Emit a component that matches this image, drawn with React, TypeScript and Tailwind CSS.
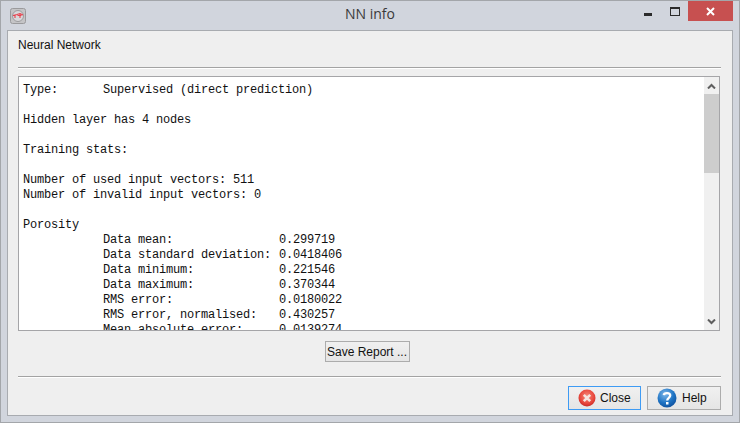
const stats = [
  ["Data mean:", "0.299719"],
  ["Data standard deviation:", "0.0418406"],
  ["Data minimum:", "0.221546"],
  ["Data maximum:", "0.370344"],
  ["RMS error:", "0.0180022"],
  ["RMS error, normalised:", "0.430257"],
  ["Mean absolute error:", "0.0139274"]
];

function Line({ children }: { children?: React.ReactNode }) {
  return <div className="h-[15px] whitespace-pre leading-[15px]">{children}</div>;
}

function ChevronUp() {
  return (
    <svg width="9" height="6" viewBox="0 0 9 6" fill="none" stroke="#5f5f5f" strokeWidth="2">
      <path d="M1 5.5 4.5 2 8 5.5" />
    </svg>
  );
}

function ChevronDown() {
  return (
    <svg width="9" height="6" viewBox="0 0 9 6" fill="none" stroke="#5f5f5f" strokeWidth="2">
      <path d="M1 .5 4.5 4 8 .5" />
    </svg>
  );
}

function AppIcon() {
  return (
    <svg width="16" height="16" viewBox="0 0 16 16" fill="none">
      <rect x=".5" y=".5" width="15" height="15" rx="2" fill="#c4c4c6" stroke="#9a9a9c" />
      <circle cx="8" cy="8" r="5.5" fill="#d8d8da" stroke="#9c9c9e" />
      <path d="M3 7.5 7 6.5 10 5.5 13 7M5 7v3M10 6v4M7.5 7.5h4" stroke="#e8404c" strokeWidth="1.1" />
    </svg>
  );
}

function CloseIcon() {
  return (
    <svg width="18" height="18" viewBox="0 0 18 18" fill="none">
      <defs>
        <radialGradient id="closeFill" cx="0.5" cy="0.4" r="0.6">
          <stop offset="0" stopColor="#f58b7c" />
          <stop offset="0.7" stopColor="#e8473c" />
          <stop offset="1" stopColor="#c92a26" />
        </radialGradient>
      </defs>
      <circle cx="9" cy="9" r="8.5" fill="url(#closeFill)" />
      <path d="M5.8 5.8 12.2 12.2M12.2 5.8 5.8 12.2" stroke="#f6e4df" strokeWidth="2.6" />
    </svg>
  );
}

function HelpIcon() {
  return (
    <svg width="20" height="20" viewBox="0 0 20 20" fill="none">
      <defs>
        <radialGradient id="helpFill" cx="0.4" cy="0.3" r="0.75">
          <stop offset="0" stopColor="#7fb8ea" />
          <stop offset="0.6" stopColor="#1f74c4" />
          <stop offset="1" stopColor="#0f4f9c" />
        </radialGradient>
      </defs>
      <circle cx="10" cy="10" r="9.5" fill="url(#helpFill)" />
      <path d="M6.8 7.2C7 4.6 13.2 4.4 13.2 7.6 13.2 9.8 10.2 9.8 10.2 12.4" stroke="#fff" strokeWidth="2.3" />
      <rect x="9" y="14" width="2.5" height="2.5" fill="#fff" />
    </svg>
  );
}

export default function App() {
  return (
    <div className="flex h-[423px] w-[740px] flex-col overflow-hidden border border-[#a3a6aa] bg-[#d1d5dd] font-['Liberation_Sans',sans-serif] text-xs text-[#111]">
      {/* title bar */}
      <div className="grid h-[29px] shrink-0 grid-cols-[1fr_auto_1fr] items-start">
        <div className="mt-[7px] pl-[9px]">
          <AppIcon />
        </div>
        <div className="pt-[3px] text-center font-['Open_Sans',sans-serif] text-[14px] leading-[19px] text-[#3a3a3a]">
          NN info
        </div>
        <div className="flex items-start justify-end pr-[6px]">
          <div className="mt-[12px] mr-[18px] h-[3px] w-[8px] bg-[#2b2b2b]" />
          <div className="mt-[6px] mr-[8px] h-[9px] w-[10px] border border-t-[2px] border-[#2b2b2b]" />
          <div className="flex h-[20px] w-[45px] items-center justify-center bg-[#c75050]">
            <svg width="9" height="9" viewBox="0 0 9 9" stroke="#fff" strokeWidth="2">
              <path d="M1 1 8 8M8 1 1 8" />
            </svg>
          </div>
        </div>
      </div>

      {/* body */}
      <div className="mr-[6px] mb-[6px] ml-[6px] flex flex-1 flex-col border border-[#a8abb0] bg-[#efefef] pr-[11px] pl-[10px]">
        <div className="h-[28px] pt-[7px] leading-[15px]">Neural Network</div>
        <div className="mt-[8px] h-[2px] border-t border-[#a3a3a3] bg-white" />

        <div className="mt-[7px] mr-[1px] flex h-[255px] shrink-0 border border-[#a5a5a8] bg-white">
          <div className="flex-1 overflow-hidden pt-[6px] pl-[4px] font-['Liberation_Mono',monospace] text-xs tracking-[-0.2px] text-[#111]">
            <Line>
              <span className="inline-block w-[80px]">Type:</span>Supervised (direct prediction)
            </Line>
            <Line />
            <Line>Hidden layer has 4 nodes</Line>
            <Line />
            <Line>Training stats:</Line>
            <Line />
            <Line>Number of used input vectors: 511</Line>
            <Line>Number of invalid input vectors: 0</Line>
            <Line />
            <Line>Porosity</Line>
            {stats.map(([label, value]) => (
              <Line key={label}>
                <span className="ml-[80px] inline-block w-[176px]">{label}</span>
                {value}
              </Line>
            ))}
          </div>
          <div className="flex w-[15px] flex-col bg-[#f0f0f0]">
            <div className="flex h-[17px] items-center justify-center">
              <ChevronUp />
            </div>
            <div className="h-[79px] bg-[#cdcdcd]" />
            <div className="flex-1" />
            <div className="flex h-[17px] items-center justify-center">
              <ChevronDown />
            </div>
          </div>
        </div>

        <div className="mt-[10px] flex justify-center pr-[5px]">
          <button className="h-[21px] w-[85px] border border-[#acacac] bg-gradient-to-b from-[#f0f0f0] to-[#e5e5e5] text-xs">
            Save Report ...
          </button>
        </div>

        <div className="mt-[14px] h-[2px] border-t border-[#a3a3a3] bg-white" />

        <div className="mt-[8px] flex justify-end gap-[6px]">
          <button className="flex h-[24px] w-[73px] items-center gap-[4px] border border-[#3e9bf4] bg-gradient-to-b from-[#f0f0f0] to-[#e5e5e5] pl-[9px] text-xs">
            <CloseIcon />
            Close
          </button>
          <button className="flex h-[24px] w-[74px] items-center gap-[5px] border border-[#acacac] bg-gradient-to-b from-[#f0f0f0] to-[#e5e5e5] pl-[9px] text-xs">
            <HelpIcon />
            Help
          </button>
        </div>
      </div>
    </div>
  );
}
